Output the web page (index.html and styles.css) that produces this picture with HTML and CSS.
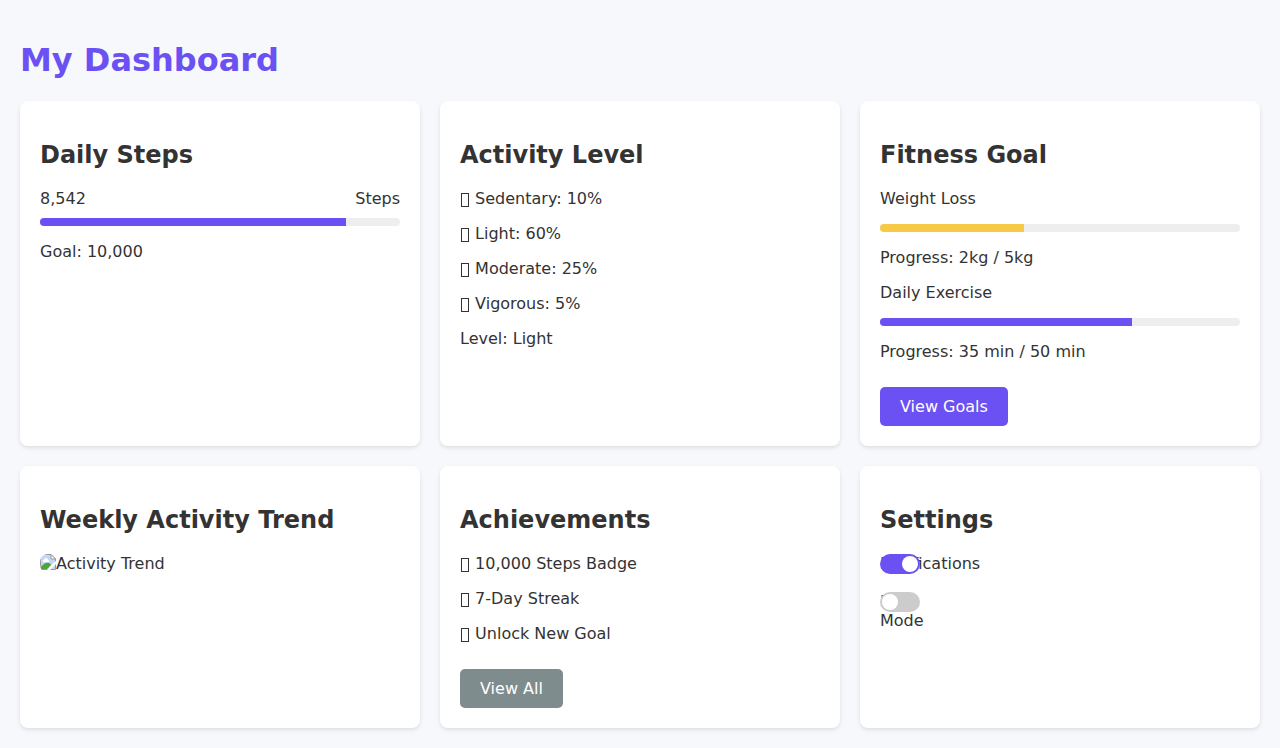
FILE: index.html
```html
<!DOCTYPE html>
<html lang="en">
<head>
<meta charset="UTF-8">
<meta name="viewport" content="width=device-width, initial-scale=1">
<title>My Dashboard</title>
<link rel="stylesheet" href="styles.css">
</head>
<body>
<main class="dashboard">
  <h1 class="title">My Dashboard</h1>
  <div class="grid">
    <section class="card">
      <h2>Daily Steps</h2>
      <div class="steps"><span>8,542</span><span>Steps</span></div>
      <div class="bar"><div class="fill" style="width: 85%"></div></div>
      <p>Goal: 10,000</p>
    </section>
    <section class="card">
      <h2>Activity Level</h2>
      <p><span class="marker"></span> Sedentary: 10%</p>
      <p><span class="marker"></span> Light: 60%</p>
      <p><span class="marker"></span> Moderate: 25%</p>
      <p><span class="marker"></span> Vigorous: 5%</p>
      <p>Level: Light</p>
    </section>
    <section class="card">
      <h2>Fitness Goal</h2>
      <p>Weight Loss</p>
      <div class="bar"><div class="fill fill-warm" style="width: 40%"></div></div>
      <p>Progress: 2kg / 5kg</p>
      <p>Daily Exercise</p>
      <div class="bar"><div class="fill" style="width: 70%"></div></div>
      <p>Progress: 35 min / 50 min</p>
      <button class="button" type="button">View Goals</button>
    </section>
    <section class="card">
      <h2>Weekly Activity Trend</h2>
      <div class="chart">
        <svg class="chart-icon" viewBox="0 0 16 16" aria-hidden="true">
          <path d="M1 1h10l4 4v10H1z" fill="#c3d7f7"/>
          <path d="M3 8q-1-2 1-2 0-2 2-2t2 2q2 0 1 2z" fill="#fff"/>
          <path d="M1 15v-2q4-5 8-4l3 2-5 4z" fill="#4da53a"/>
          <path d="M.5 15.500V.5H11L15.500 5v10.500z" fill="none" stroke="#999"/>
          <path d="M11 .5V5h4.500z" fill="#fff" stroke="#999"/>
          <path d="M16 7v3l-6 6H7l4-5z" fill="#fff"/>
        </svg><span>Activity Trend</span>
      </div>
    </section>
    <section class="card">
      <h2>Achievements</h2>
      <p><span class="marker"></span> 10,000 Steps Badge</p>
      <p><span class="marker"></span> 7-Day Streak</p>
      <p><span class="marker"></span> Unlock New Goal</p>
      <button class="button button-muted" type="button">View All</button>
    </section>
    <section class="card">
      <h2>Settings</h2>
      <div class="settings">
        <label class="switch">Notifications<input type="checkbox" checked><span class="slider"></span></label>
        <label class="switch">Dark Mode<input type="checkbox"><span class="slider"></span></label>
      </div>
    </section>
  </div>
</main>
</body>
</html>
```
FILE: styles.css
```css
* {
  box-sizing: border-box;
}

body {
  margin: 0;
  background: #f7f8fc;
  color: #333;
  font-family: "DejaVu Sans", sans-serif;
  font-size: 16px;
  line-height: 19px;
}

.dashboard {
  padding: 20px;
}

.title {
  margin: 20px 0;
  color: #6b50f3;
  font-size: 32px;
  line-height: 41px;
}

.grid {
  display: grid;
  grid-template-columns: repeat(3, 1fr);
  gap: 20px;
}

.card {
  padding: 20px;
  border-radius: 8px;
  background: #fff;
  box-shadow: 0 2px 4px rgba(0, 0, 0, 0.1);
}

.card h2 {
  margin: 20px 0;
  font-size: 24px;
  line-height: 28px;
}

.card p {
  margin: 16px 0;
}

.marker {
  display: inline-block;
  width: 8px;
  height: 14px;
  margin: 0 1px;
  border: 1px solid #333;
  vertical-align: -3px;
}

.steps {
  display: flex;
  justify-content: space-between;
  margin-bottom: 10px;
}

.bar {
  height: 8px;
  overflow: hidden;
  border-radius: 4px;
  background: #eee;
}

.fill {
  height: 100%;
  background: #6b50f3;
}

.fill-warm {
  background: #f7ca45;
}

.button {
  margin-top: 10px;
  padding: 10px 20px;
  border: 0;
  border-radius: 5px;
  background: #6b50f3;
  color: #fff;
  font: inherit;
  cursor: pointer;
}

.button-muted {
  background: #7f8c8d;
}

.chart {
  display: flex;
  overflow: hidden;
  border-radius: 8px;
}

.chart-icon {
  width: 16px;
  height: 16px;
}

.settings {
  display: flex;
  flex-direction: column;
  gap: 18px;
}

.switch {
  position: relative;
  width: 40px;
  height: 20px;
}

.switch input {
  position: absolute;
  width: 0;
  height: 0;
  margin: 0;
  opacity: 0;
}

.slider {
  position: absolute;
  inset: 0;
  border-radius: 20px;
  background: #ccc;
  cursor: pointer;
}

.slider::before {
  position: absolute;
  bottom: 2px;
  left: 2px;
  width: 16px;
  height: 16px;
  border-radius: 50%;
  background: #fff;
  content: "";
}

.switch input:checked + .slider {
  background: #6b50f3;
}

.switch input:checked + .slider::before {
  transform: translateX(20px);
}
```
